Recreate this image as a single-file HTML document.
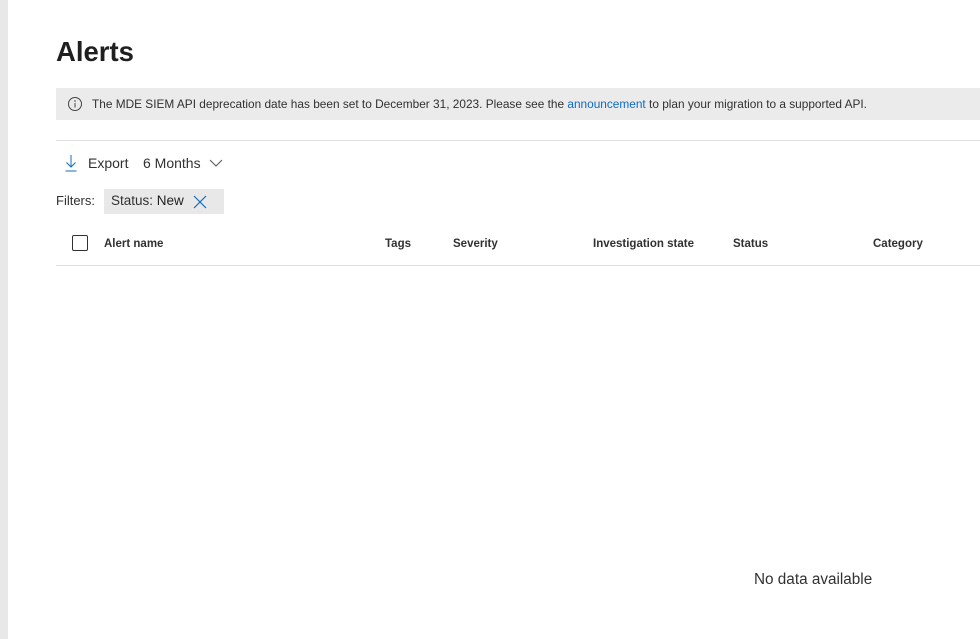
<!DOCTYPE html><html><head><style>
body{margin:0;width:980px;height:639px;background:#fff;font-family:"Liberation Sans",sans-serif;color:#323130;position:relative;overflow:hidden}
.l{position:absolute;left:0;top:0;width:8px;height:639px;background:#e8e8e8}
.a{position:absolute;white-space:nowrap}
.h{font-size:11.5px;font-weight:bold;top:238px}
</style></head><body>
<div class="l"></div>
<div class="a" style="left:56px;top:36px;font-size:27.5px;font-weight:bold;color:#201f1e">Alerts</div>
<div class="a" style="left:56px;top:88px;width:924px;height:32px;background:#ebebeb"></div>
<svg class="a" style="left:67px;top:96px" width="16" height="16"><circle cx="8" cy="8" r="6.5" fill="none" stroke="#444" stroke-width="1"/><line x1="8" y1="7" x2="8" y2="11.5" stroke="#444"/><circle cx="8" cy="5" r=".8" fill="#444"/></svg>
<div class="a" style="left:92px;top:97px;font-size:11.85px;color:#323130">The MDE SIEM API deprecation date has been set to December 31, 2023. Please see the <span style="color:#0f6cbd">announcement</span> to plan your migration to a supported API.</div>
<div class="a" style="left:56px;top:140px;width:924px;height:1px;background:#e1dfdd"></div>
<svg class="a" style="left:64px;top:154px" width="14" height="18"><path d="M7 1V13M2.5 8.5l4.5 4.5 4.5-4.5M1.5 17h11" fill="none" stroke="#0f6cbd" stroke-width="1"/></svg>
<div class="a" style="left:88px;top:155px;font-size:14px">Export</div>
<div class="a" style="left:143px;top:155px;font-size:14px">6 Months</div>
<svg class="a" style="left:209px;top:158px" width="14" height="10"><path d="M1 2l6 6 6-6" fill="none" stroke="#555" stroke-width="1"/></svg>
<div class="a" style="left:56px;top:193px;font-size:13px">Filters:</div>
<div class="a" style="left:104px;top:189px;width:120px;height:25px;background:#e8e8e8"></div>
<div class="a" style="left:111px;top:193px;font-size:13.5px">Status: <span style="color:#201f1e">New</span></div>
<svg class="a" style="left:193px;top:195px" width="14" height="14"><path d="M1 1l12 12M13 1L1 13" stroke="#0f6cbd" stroke-width="1.2"/></svg>
<div class="a" style="left:72px;top:235px;width:14px;height:14px;border:1px solid #323130;border-radius:2px"></div>
<div class="a h" style="left:104px">Alert name</div>
<div class="a h" style="left:385px">Tags</div>
<div class="a h" style="left:453px">Severity</div>
<div class="a h" style="left:593px">Investigation state</div>
<div class="a h" style="left:733px">Status</div>
<div class="a h" style="left:873px">Category</div>
<div class="a" style="left:56px;top:265px;width:924px;height:1px;background:#e1dfdd"></div>
<div class="a" style="left:754px;top:571px;font-size:15.3px">No data available</div>
</body></html>
